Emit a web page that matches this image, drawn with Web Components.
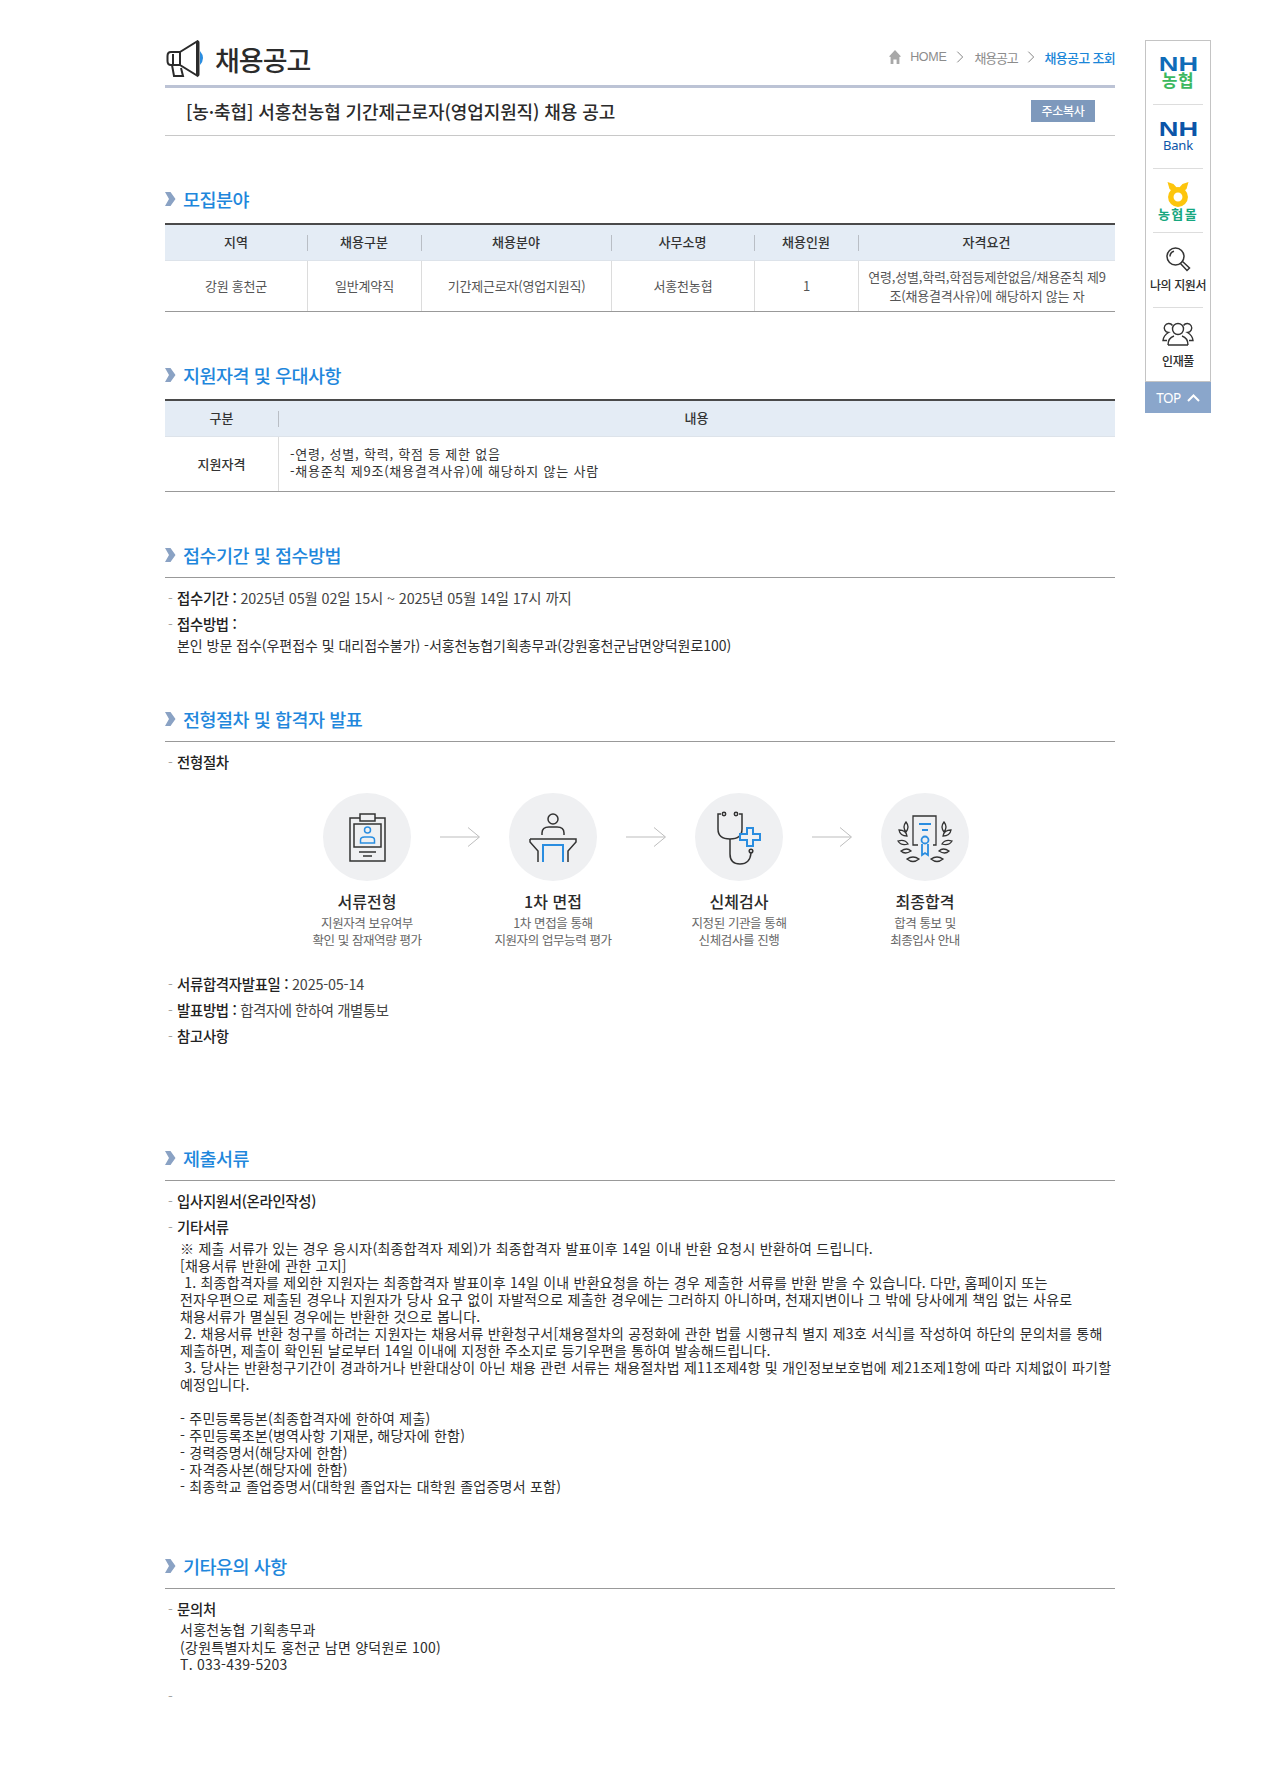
<!DOCTYPE html>
<html lang="ko"><head><meta charset="utf-8"><title>채용공고</title>
<style>
html,body{margin:0;background:#fff}
body{font-family:"Noto Sans CJK KR","Noto Sans",sans-serif;color:#333;font-size:14px}
b{font-weight:500;color:#222;letter-spacing:-.3px}
</style></head><body>
<x-page>
  <main>
    <x-top></x-top>
    <x-notice>[농·축협] 서홍천농협 기간제근로자(영업지원직) 채용 공고</x-notice>

    <x-section title-text="모집분야">
      <x-table style="--cols:142px 114px 190px 143px 104px 257px">
        <x-th>지역</x-th><x-th sep>채용구분</x-th><x-th sep>채용분야</x-th><x-th sep>사무소명</x-th><x-th sep>채용인원</x-th><x-th sep>자격요건</x-th>
        <x-td>강원 홍천군</x-td><x-td sep>일반계약직</x-td><x-td sep>기간제근로자(영업지원직)</x-td><x-td sep>서홍천농협</x-td><x-td sep>1</x-td><x-td sep>연령,성별,학력,학점등제한없음/채용준칙 제9조(채용결격사유)에 해당하지 않는 자</x-td>
      </x-table>
    </x-section>

    <x-section title-text="지원자격 및 우대사항">
      <x-table style="--cols:113px 837px">
        <x-th>구분</x-th><x-th sep>내용</x-th>
        <x-td strong tall>지원자격</x-td><x-td sep left>-연령, 성별, 학력, 학점 등 제한 없음<br>-채용준칙 제9조(채용결격사유)에 해당하지 않는 사람</x-td>
      </x-table>
    </x-section>

    <x-section ruled title-text="접수기간 및 접수방법">
      <x-item><b>접수기간 :</b> 2025년 05월 02일 15시 ~ 2025년 05월 14일 17시 까지</x-item>
      <x-item><b>접수방법 :</b></x-item>
      <x-para style="--i:12px;--ls:-.04px;margin-top:1px">본인 방문 접수(우편접수 및 대리접수불가) -서홍천농협기획총무과(강원홍천군남면양덕원로100)</x-para>
    </x-section>

    <x-section ruled title-text="전형절차 및 합격자 발표" style="margin-top:50px">
      <x-item><b>전형절차</b></x-item>
      <x-flow>
        <x-step name="서류전형" l1="지원자격 보유여부" l2="확인 및 잠재역량 평가">
          <svg width="88" height="88" viewBox="0 0 88 88" fill="none" stroke="#333" stroke-width="1.500">
            <path d="M37 25H27v43h35V25H52"/><rect x="37" y="21" width="15" height="7"/><rect x="31" y="31" width="27" height="23"/>
            <path d="M36 59h17M40 63h9"/>
            <circle cx="44.500" cy="37" r="3" stroke="#2a8de0"/><path d="M37.500 50v-3q0-3 4-3h6q4 0 4 3v3z" stroke="#2a8de0"/>
          </svg>
        </x-step>
        <x-arrow></x-arrow>
        <x-step name="1차 면접" l1="1차 면접을 통해" l2="지원자의 업무능력 평가">
          <svg width="88" height="88" viewBox="0 0 88 88" fill="none" stroke="#333" stroke-width="1.500">
            <circle cx="44" cy="26" r="5"/><path d="M33 42v-2q0-6 7-6h8q7 0 7 6v2"/>
            <path d="M21 46h46v3l-8 9v11M21 46v3l8 9v11"/>
            <path d="M34 69V52h20v17" stroke="#2a8de0" stroke-width="2"/>
          </svg>
        </x-step>
        <x-arrow></x-arrow>
        <x-step name="신체검사" l1="지정된 기관을 통해" l2="신체검사를 진행">
          <svg width="88" height="88" viewBox="0 0 88 88" fill="none" stroke="#333" stroke-width="1.500">
            <path d="M26 21h-3v15q0 10 12 10t12-10V21h-3"/><circle cx="29" cy="21" r="1.700"/><circle cx="41" cy="21" r="1.700"/>
            <path d="M35 46v15q0 10 10 10 10 0 11-11"/><circle cx="56" cy="58" r="1.800"/>
            <path d="M52 35h6v6h7v6h-7v6h-6v-6h-7v-6h7z" stroke="#2a8de0" stroke-width="2"/>
          </svg>
        </x-step>
        <x-arrow></x-arrow>
        <x-step name="최종합격" l1="합격 통보 및" l2="최종입사 안내">
          <svg width="88" height="88" viewBox="0 0 88 88" fill="none" stroke="#333" stroke-width="1.300">
            <path d="M37 52h-5V23h23v29h-3"/>
            <path d="M38 31h12M41 37h6" stroke="#2a8de0" stroke-width="1.800"/><circle cx="44" cy="47" r="3.500" stroke="#2a8de0" stroke-width="1.800"/><path d="M41 51v11l3-2 3 2V51" stroke="#2a8de0" stroke-width="1.800"/>
            <path d="M25 29q-4 5 0 10 4-5 0-10zM18 37q1 6 8 6-1-6-8-6zM17 48q3 5 10 3-3-5-10-3zM20 58q4 4 10 0-4-4-10 0zM26 66q6 5 12 0-6-4-12 0z"/>
            <path d="M63 29q4 5 0 10-4-5 0-10zM70 37q-1 6-8 6 1-6 8-6zM71 48q-3 5-10 3 3-5 10-3zM68 58q-4 4-10 0 4-4 10 0zM62 66q-6 5-12 0 6-4 12 0z"/>
          </svg>
        </x-step>
      </x-flow>
      <x-item style="letter-spacing:-.2px"><b>서류합격자발표일 :</b> 2025-05-14</x-item>
      <x-item style="letter-spacing:-.4px"><b>발표방법 :</b> 합격자에 한하여 개별통보</x-item>
      <x-item><b>참고사항</b></x-item>
      <x-para style="--i:15px;height:47px"></x-para>
    </x-section>

    <x-section ruled title-text="제출서류">
      <x-item><b>입사지원서(온라인작성)</b></x-item>
      <x-item><b>기타서류</b></x-item>
      <x-para style="--i:15px;--ls:.24px;margin-top:1px">※ 제출 서류가 있는 경우 응시자(최종합격자 제외)가 최종합격자 발표이후 14일 이내 반환 요청시 반환하여 드립니다.<br>[채용서류 반환에 관한 고지]<br>&nbsp;1. 최종합격자를 제외한 지원자는 최종합격자 발표이후 14일 이내 반환요청을 하는 경우 제출한 서류를 반환 받을 수 있습니다. 다만, 홈페이지 또는<br>전자우편으로 제출된 경우나 지원자가 당사 요구 없이 자발적으로 제출한 경우에는 그러하지 아니하며, 천재지변이나 그 밖에 당사에게 책임 없는 사유로<br>채용서류가 멸실된 경우에는 반환한 것으로 봅니다.<br>&nbsp;2. 채용서류 반환 청구를 하려는 지원자는 채용서류 반환청구서[채용절차의 공정화에 관한 법률 시행규칙 별지 제3호 서식]를 작성하여 하단의 문의처를 통해<br>제출하면, 제출이 확인된 날로부터 14일 이내에 지정한 주소지로 등기우편을 통하여 발송해드립니다.<br>&nbsp;3. 당사는 반환청구기간이 경과하거나 반환대상이 아닌 채용 관련 서류는 채용절차법 제11조제4항 및 개인정보보호법에 제21조제1항에 따라 지체없이 파기할<br>예정입니다.<br><br>- 주민등록등본(최종합격자에 한하여 제출)<br>- 주민등록초본(병역사항 기재분, 해당자에 한함)<br>- 경력증명서(해당자에 한함)<br>- 자격증사본(해당자에 한함)<br>- 최종학교 졸업증명서(대학원 졸업자는 대학원 졸업증명서 포함)</x-para>
    </x-section>

    <x-section ruled title-text="기타유의 사항" style="margin-top:56px">
      <x-item><b>문의처</b></x-item>
      <x-para style="--i:15px;--ls:.26px;--lh:17.500px;">서홍천농협 기획총무과<br>(강원특별자치도 홍천군 남면 양덕원로 100)<br>T. 033-439-5203</x-para>
      <x-item style="margin-top:9px"></x-item>
    </x-section>
  </main>
  <x-quick></x-quick>
</x-page>

<script>
const def=(name,css,html)=>{
  customElements.define(name,class extends HTMLElement{
    constructor(){super();const r=this.attachShadow({mode:'open'});
      r.innerHTML=`<style>${css}</style>`+(typeof html==='function'?html(this):html);}
  });
};
def('x-page',`:host{display:flex;align-items:flex-start;padding-left:165px;gap:30px;height:1774px;box-sizing:border-box;overflow:hidden}
  ::slotted(main){width:950px;flex:none}`,`<slot></slot>`);

def('x-top',`:host{display:flex;align-items:flex-start;justify-content:space-between;height:85px;border-bottom:3px solid #bcc3d5}
  .t{display:flex;align-items:center;gap:9px;margin-top:40px;height:38px;font-size:27px;font-weight:500;color:#2b2b2b;letter-spacing:-1px}
  .t svg{flex:none;margin-left:1px}
  nav{display:flex;align-items:center;margin-top:47px;height:20px;font-size:13px;color:#8c8c8c;letter-spacing:-1.2px}
  nav svg{flex:none}
  .en{margin-left:9px;font:12.500px "Liberation Sans",sans-serif;letter-spacing:-.3px}
  .h{margin:0 10px 0 10px}.c{margin:0 9px 0 10px}.cur{color:#1a86d8;font-weight:500;letter-spacing:-.7px}`,
  `<div class="t"><svg width="40" height="38" viewBox="0 0 40 38" fill="none" stroke="#2b2b2b" stroke-width="2">
      <path d="M31 1.500v34L14 25V12z M31 1.500c1-.4 1.500 0 1.500 1v32c0 1-.5 1.400-1.500 1"/><path d="M14 12H5q-3.500 0-3.500 4v5q0 4 3.500 4h9"/><path d="M7 14v11M6 25l2 11h9l-2-8"/>
      <path d="M34 11q6 7 0 14z" fill="#2a8de0" stroke="none"/></svg><span>채용공고</span></div>
    <nav><svg width="12" height="14" viewBox="0 0 15 14" preserveAspectRatio="none"><path d="M7.500 0 15 6.500 13 7v7H9.500V9.500h-4V14H2V7L0 6.500z" fill="#a8a8a8"/></svg>
      <span class="en">HOME</span>
      <svg class="h" width="8" height="14" viewBox="0 0 9 14" fill="none" stroke="#777"><path d="M1.500 1l6 6-6 6"/></svg>
      <span>채용공고</span>
      <svg class="c" width="8" height="14" viewBox="0 0 9 14" fill="none" stroke="#777"><path d="M1.500 1l6 6-6 6"/></svg>
      <span class="cur">채용공고 조회</span></nav>`);

def('x-notice',`:host{display:flex;align-items:center;height:47px;border-bottom:1px solid #c8c8c8;padding:0 20px 0 21px;font-size:18px;font-weight:500;color:#2b2b2b;letter-spacing:-.09px;justify-content:space-between}
  span.txt{margin-top:-2px}
  span.btn{background:#7e99bc;color:#fff;font-size:12px;font-weight:500;width:64px;height:22px;line-height:21px;text-align:center;letter-spacing:-.3px;flex:none;margin-top:-1px}`,
  `<span class="txt"><slot></slot></span><span class="btn">주소복사</span>`);

def('x-section',`:host{display:block;margin-top:48px}
  h2{margin:0 0 9px;height:30px;display:flex;align-items:center;gap:7px;font-size:18.500px;font-weight:500;color:#1f87dc;letter-spacing:-.5px}
  :host([ruled]) h2{padding-bottom:7px;border-bottom:1px solid #999;margin-bottom:6px}
  svg{flex:none}`,
  h=>`<h2><svg width="11" height="14" viewBox="0 0 11 14"><path d="M0 0h5.500l5 7-5 7H0l4-7z" fill="#8aa2c4"/></svg><span>${h.getAttribute('title-text')}</span></h2><slot></slot>`);

def('x-table',`:host{display:grid;grid-template-columns:var(--cols);border-top:2px solid #4a4a4a;border-bottom:1px solid #999}`,`<slot></slot>`);
def('x-th',`:host{display:flex;align-items:center;justify-content:center;padding-bottom:2px;box-sizing:border-box;height:36px;background:#e4ecf5;border-bottom:1px solid #dde3ea;font-size:13px;font-weight:500;color:#333;position:relative}
  :host([sep])::before{content:"";position:absolute;left:0;top:10px;height:16px;border-left:1px solid #b9bec5}`,`<slot></slot>`);
def('x-td',`:host{display:flex;align-items:center;justify-content:center;text-align:center;box-sizing:border-box;min-height:50px;padding:0 8px 1px;font-size:13px;line-height:19px;color:#555;letter-spacing:-.2px}
  :host([sep]){border-left:1px solid #dcdcdc}
  :host([strong]){font-weight:500;color:#333;letter-spacing:0}
  :host([tall]){min-height:54px}
  :host([left]){justify-content:flex-start;text-align:left;padding:0 11px 5px;line-height:17px;color:#333;letter-spacing:.78px}`,`<slot></slot>`);

def('x-item',`:host{display:flex;height:26px;align-items:center;padding-left:3px;font-size:14.400px;letter-spacing:-.13px;color:#444}
  i{font-style:normal;width:9px;flex:none;color:#888;font-weight:300}
  div{white-space:pre-wrap}`,`<i>-</i><div><slot></slot></div>`);
def('x-para',`:host{display:block;padding-left:var(--i,12px);font-size:14px;line-height:var(--lh,17px);color:#2d2d2d;letter-spacing:var(--ls,0)}`,`<slot></slot>`);

def('x-flow',`:host{display:flex;margin:19px 0 22px 129px}`,`<slot></slot>`);
def('x-step',`:host{display:flex;flex-direction:column;align-items:center;width:146px;flex:none;text-align:center}
  .c{width:88px;height:88px;border-radius:50%;background:#eff0f2;display:flex}
  .n{margin-top:10px;font-size:16px;line-height:20px;font-weight:500;color:#2b2b2b}
  .d{margin-top:3px;font-size:12.500px;line-height:17px;color:#666;letter-spacing:-.4px;white-space:nowrap}`,
  h=>`<div class="c"><slot></slot></div><div class="n">${h.getAttribute('name')}</div><div class="d">${h.getAttribute('l1')}<br>${h.getAttribute('l2')}</div>`);
def('x-arrow',`:host{display:flex;align-items:center;width:40px;height:88px;flex:none}`,
  `<svg width="40" height="20" viewBox="0 0 40 20" fill="none" stroke="#bdbdbd"><path d="M0 10h39M28 .5 39.500 10 28 19.500"/></svg>`);

def('x-quick',`:host{display:block;width:66px;flex:none;margin-top:40px;font-family:"Noto Sans CJK KR",sans-serif}
  .box{border:1px solid #c4c4c4;box-sizing:border-box;height:342px;padding:0 7px;display:flex;flex-direction:column;background:#fff}
  .it{display:flex;flex-direction:column;align-items:center;height:64px;box-sizing:border-box;border-bottom:1px solid #ddd;flex:none}
  .it.a{padding-top:17px}.it.s{height:75px;padding-top:13px}.it.l{border:0;height:74px;padding-top:12px}
  .nh{font:bold 20px/14px "Liberation Sans",sans-serif;color:#0f6cb8;transform:scaleX(1.36);height:14px}
  .bk{color:#0b55a8}
  .ko{font-size:17px;line-height:16px;height:16px;font-weight:700;color:#3cb85f;letter-spacing:.5px;margin-top:1px}
  .bank{font:13px/14px "Noto Sans",sans-serif;color:#0b55a8;margin-top:2px;letter-spacing:-.2px}
  .mall{font-size:13px;line-height:14px;font-weight:700;color:#17a77f;letter-spacing:1.400px;white-space:nowrap}
  .t{font-size:12px;line-height:17px;font-weight:500;color:#2b2b2b;letter-spacing:-.4px;white-space:nowrap;margin-top:4px}
  .top{height:31px;background:#8aa6cb;color:#fff;display:flex;align-items:center;justify-content:center;gap:6px;font:13.500px "Noto Sans",sans-serif;letter-spacing:-.4px}`,
  `<div class="box">
    <div class="it a" style="padding-top:16px"><div class="nh">NH</div><div class="ko">농협</div></div>
    <div class="it a"><div class="nh bk">NH</div><div class="bank">Bank</div></div>
    <div class="it" style="padding-top:13px"><svg width="22" height="25" viewBox="0 0 22 25"><circle cx="11" cy="15" r="7.200" fill="none" stroke="#fdc50d" stroke-width="5.500"/><path d="M.5 0l6 2 4.500 5 4.500-5 6-2-2 7-4 3h-9l-4-3z" fill="#fdc50d"/></svg><div class="mall">농협몰</div></div>
    <div class="it s"><svg width="26" height="26" viewBox="0 0 26 26" fill="none" stroke="#333" stroke-width="1.500"><circle cx="10.500" cy="10.500" r="8.500"/><path d="M5 10.500a5.500 5.500 0 0 1 4-5.300"/><path d="M17 15l7.500 7-2.500 2.500-7-7.500"/></svg><div class="t">나의 지원서</div></div>
    <div class="it l"><svg width="32" height="26" viewBox="0 0 32 26" fill="none" stroke="#333" stroke-width="1.400"><circle cx="16" cy="9" r="5.500"/><path d="M6 25q0-7 6-9M26 25q0-7-6-9M6 25h20"/><path d="M10.500 5.500a4.500 4.500 0 1 0-4 7q-5 3-5.500 8h4M21.500 5.500a4.500 4.500 0 1 1 4 7q5 3 5.500 8h-4"/></svg><div class="t" style="margin-top:6px">인재풀</div></div>
  </div>
  <div class="top"><span>TOP</span><svg width="13" height="8" viewBox="0 0 13 8" fill="none" stroke="#fff" stroke-width="2"><path d="M1 7l5.500-5.500L12 7"/></svg></div>`);
</script>
</body></html>
